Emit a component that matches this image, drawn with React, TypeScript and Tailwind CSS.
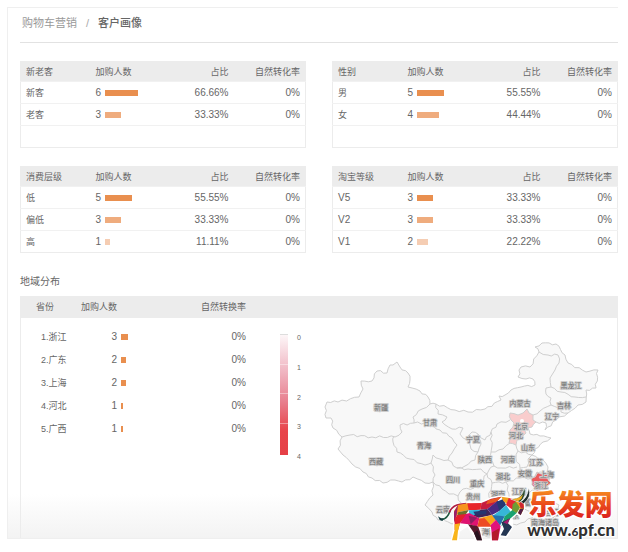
type Row = { name: string; count: number; share: string };

const BAR_SHADES = ["bg-[#e98f4f]", "bg-[#efac7e]", "bg-[#f5cdb3]"];

const GROUPS: { title: string; rows: Row[] }[] = [
  {
    title: "新老客",
    rows: [
      { name: "新客", count: 6, share: "66.66%" },
      { name: "老客", count: 3, share: "33.33%" },
    ],
  },
  {
    title: "性别",
    rows: [
      { name: "男", count: 5, share: "55.55%" },
      { name: "女", count: 4, share: "44.44%" },
    ],
  },
  {
    title: "消费层级",
    rows: [
      { name: "低", count: 5, share: "55.55%" },
      { name: "偏低", count: 3, share: "33.33%" },
      { name: "高", count: 1, share: "11.11%" },
    ],
  },
  {
    title: "淘宝等级",
    rows: [
      { name: "V5", count: 3, share: "33.33%" },
      { name: "V2", count: 3, share: "33.33%" },
      { name: "V1", count: 2, share: "22.22%" },
    ],
  },
];

const REGIONS = [
  { name: "1.浙江", count: 3 },
  { name: "2.广东", count: 2 },
  { name: "3.上海", count: 2 },
  { name: "4.河北", count: 1 },
  { name: "5.广西", count: 1 },
];

type Pt = [number, number];

const OUTLINE: Pt[] = [
  [325, 407], [327, 402], [338, 402], [359, 397], [363, 389], [361, 381], [372, 381], [377, 371],
  [387, 373], [390, 365], [393, 365], [397, 362], [400, 367], [408, 373], [410, 380], [408, 387],
  [420, 391], [428, 397], [430, 404], [436, 404], [455, 410], [468, 412], [485, 409], [501, 400],
  [499, 396], [505, 395], [511, 390], [521, 387], [535, 385], [533, 379], [526, 379], [518, 377],
  [521, 367], [530, 367], [539, 352], [535, 347], [542, 343], [556, 344], [565, 355], [568, 363],
  [586, 372], [598, 370], [596, 388], [586, 390], [586, 402], [578, 405], [568, 413], [556, 420],
  [545, 430], [546, 423], [536, 422], [528, 428], [530, 434], [540, 436], [551, 438], [543, 442],
  [535, 449], [532, 455], [543, 460], [548, 467], [549, 475], [548, 488], [545, 500], [538, 512],
  [525, 522], [508, 526], [490, 528], [475, 527], [465, 520], [452, 524], [443, 520], [438, 520],
  [432, 512], [425, 505], [433, 495], [433, 482], [425, 483], [413, 477], [402, 482], [395, 480],
  [383, 483], [372, 478], [363, 472], [352, 464], [343, 455], [338, 449], [342, 437], [333, 428],
  [331, 418], [326, 418],
];

const BORDERS: Pt[][] = [
  [[342, 437], [350, 435], [372, 437], [395, 437], [402, 432], [400, 425], [414, 423], [413, 417], [422, 409], [430, 404]],
  [[394, 436], [393, 442], [397, 452], [410, 459], [425, 465], [431, 463], [433, 455], [440, 459], [448, 460], [452, 453], [457, 445], [452, 438], [440, 430], [425, 423], [414, 423]],
  [[433, 482], [435, 475], [431, 463]],
  [[436, 404], [438, 414], [447, 417], [442, 422], [452, 429], [463, 428], [460, 434], [467, 440], [471, 449], [478, 452], [475, 460], [465, 466], [457, 468], [448, 460]],
  [[467, 440], [472, 432], [478, 434], [481, 444], [478, 452]],
  [[478, 434], [485, 440], [491, 432], [497, 424], [510, 420]],
  [[491, 432], [492, 446], [489, 458], [494, 466], [502, 468], [517, 467]],
  [[510, 443], [503, 449], [491, 452]],
  [[516, 445], [518, 451], [532, 455]],
  [[518, 451], [516, 458], [520, 468], [527, 467], [528, 459], [532, 455]],
  [[520, 468], [520, 478], [532, 478], [540, 472], [549, 475]],
  [[457, 468], [468, 469], [481, 469], [487, 474], [481, 482], [474, 488], [463, 489], [458, 496], [449, 494], [442, 489], [433, 482]],
  [[487, 474], [492, 483], [506, 482], [520, 478]],
  [[494, 466], [489, 470], [487, 474]],
  [[492, 483], [489, 497], [494, 505], [507, 506], [509, 494], [506, 482]],
  [[458, 496], [462, 507], [475, 505], [489, 502]],
  [[462, 507], [458, 514], [465, 520]],
  [[507, 506], [522, 507], [524, 496], [532, 490], [537, 492], [548, 488]],
  [[522, 507], [531, 512], [538, 512]],
  [[494, 505], [496, 514], [487, 520], [485, 528]],
  [[539, 352], [548, 355], [558, 355], [559, 363], [555, 370], [550, 378], [551, 387], [561, 392], [575, 397], [586, 397]],
  [[551, 387], [546, 388], [546, 394], [551, 398], [551, 405], [561, 408], [561, 412], [568, 413]],
  [[551, 405], [540, 411], [533, 415]],
];

const HEBEI: Pt[] = [
  [510, 413], [518, 415], [523, 413], [527, 409], [529, 413], [533, 415], [533, 420], [536, 422], [532, 427],
  [524, 429], [526, 433], [518, 438], [516, 445], [509, 443], [510, 430], [514, 423], [511, 420],
];
const ZHEJIANG: Pt[] = [
  [531, 479], [535, 476], [537, 472], [541, 474], [545, 473], [549, 476], [548, 480], [551, 483], [547, 486],
  [546, 490], [541, 490], [537, 493], [535, 488], [532, 485],
];
const TAIWAN: Pt[] = [[555, 503], [559, 505], [557, 514], [553, 518], [552, 510]];

// Adds small kinks to every segment so that borders look surveyed, not ruled.
function rough(points: Pt[], closed: boolean) {
  const all = closed ? [...points, points[0]] : points;
  let d = `M${all[0][0]} ${all[0][1]}`;
  for (let i = 1; i < all.length; i++) {
    const [ax, ay] = all[i - 1];
    const [bx, by] = all[i];
    const len = Math.hypot(bx - ax, by - ay);
    const steps = Math.max(1, Math.round(len / 4));
    for (let s = 1; s < steps; s++) {
      const t = s / steps;
      const k = Math.sin(ax * 12.9 + ay * 7.3 + s * 4.1) * 1.1;
      const x = ax + (bx - ax) * t - ((by - ay) / len) * k;
      const y = ay + (by - ay) * t + ((bx - ax) / len) * k;
      d += `L${x.toFixed(1)} ${y.toFixed(1)}`;
    }
    d += `L${bx} ${by}`;
  }
  return closed ? d + "Z" : d;
}

const LABELS: [string, number, number][] = [
  ["新疆", 381, 407], ["甘肃", 430, 422], ["青海", 424, 445], ["西藏", 376, 461], ["四川", 453, 479],
  ["云南", 443, 509], ["宁夏", 473, 439], ["陕西", 485, 459], ["重庆", 477, 483], ["贵州", 473, 496],
  ["湖北", 503, 476], ["河南", 508, 459], ["湖南", 498, 494], ["江西", 519, 491], ["安徽", 525, 473],
  ["江苏", 536, 462], ["上海", 547, 474], ["浙江", 541, 485], ["山东", 528, 447], ["河北", 516, 435],
  ["北京", 521, 426], ["内蒙古", 520, 403], ["辽宁", 552, 416], ["吉林", 564, 405], ["黑龙江", 571, 385],
  ["福建", 530, 502], ["台湾", 552, 512], ["广西", 486, 513], ["广东", 512, 515], ["南海诸岛", 545, 522],
  ["海南", 489, 531],
];

function ChinaMap() {
  return (
    <svg viewBox="318 334 299 204" className="h-[204px] min-w-0 flex-1" role="img" aria-label="地域分布">
      <g stroke="#cfcfcf" strokeWidth="1" strokeLinejoin="round">
        <path d={rough(OUTLINE, true)} fill="#f8f8f8" />
        <path d={rough(HEBEI, true)} fill="#f9cdcd" />
        <path d={rough(ZHEJIANG, true)} fill="#ea5b5d" />
        <path d={rough(TAIWAN, true)} fill="#f8f8f8" />
        <ellipse cx="489" cy="534" rx="5" ry="3" fill="#f8f8f8" />
        {BORDERS.map((b, i) => (
          <path key={i} d={rough(b, false)} fill="none" />
        ))}
        <circle cx="522" cy="421" r="2" fill="#fff" stroke="none" />
      </g>
      <g fontSize="7" textAnchor="middle" fill="#707070" stroke="#cdcdcd" strokeWidth="2" strokeLinejoin="round" paintOrder="stroke">
        {LABELS.map(([name, x, y]) => (
          <text key={name} x={x} y={y + 3}>
            {name}
          </text>
        ))}
      </g>
    </svg>
  );
}

function Watermark() {
  return (
    <svg viewBox="0 30 540 171" className="absolute right-0 -bottom-[4px] h-[57px] w-[180px]" role="img" aria-label="乐发网 www.6pf.cn">
      <defs>
        <linearGradient id="flame" x1="0" y1="0" x2="0" y2="1">
          <stop offset="0" stopColor="#f7931e" />
          <stop offset="0.5" stopColor="#ea4a1c" />
          <stop offset="1" stopColor="#d8191f" />
        </linearGradient>
      </defs>
      <path
        d="M60 90L85 84L130 84L160 70L190 65L215 69L240 66L257 80L258 100L248 121L236 114L220 128L222 155L205 184L188 182L196 160L186 165L180 196L162 196L160 155L120 155L132 196L117 196L90 150L62 168L58 197L42 197L50 160L48 130Z"
        fill="#fff" stroke="#fff" strokeWidth="8" strokeLinejoin="round"
      />
      <path d="M12 133Q28 132 36 108Q45 88 66 89" fill="none" stroke="#fff" strokeWidth="10" />
      <path d="M12 133Q28 132 36 108" fill="none" stroke="#245b43" strokeWidth="5" />
      <path d="M34 112Q43 90 66 88L85 86" fill="none" stroke="#b01f45" strokeWidth="5" />
      <path d="M0 124L8 129L18 131L13 138L5 135Z" fill="#123c40" />
      <path d="M60 90L88 85L100 88L92 105L62 112L50 135L48 108Z" fill="#f7941e" />
      <path d="M60 90L48 110L48 145L56 120Z" fill="#9c1e68" />
      <path d="M60 112L92 105L84 118L57 128Z" fill="#6c6f2c" />
      <path d="M50 132L58 120L90 116L66 145L60 166L50 165Z" fill="#e41f2c" />
      <path d="M50 148L66 145L60 168L57 196L42 196L50 165Z" fill="#f9b51b" />
      <path d="M88 85L130 84L128 104L102 106L92 105Z" fill="#e8262b" />
      <path d="M130 84L160 71L190 65L172 84L148 102L128 104Z" fill="#c51d3f" />
      <path d="M150 76L190 65L176 80L144 88Z" fill="#e95a20" />
      <path d="M92 106L128 104L122 128L94 116Z" fill="#35b3dc" />
      <path d="M128 104L148 102L162 120L122 128L106 122Z" fill="#412558" />
      <path d="M106 110L146 106L144 118L112 120Z" fill="#26356f" />
      <path d="M84 118L94 114L124 130L118 155L92 148L66 145Z" fill="#df1471" />
      <path d="M92 122L118 128L98 148Z" fill="#8d1e61" />
      <path d="M90 148L120 154L126 170L132 196L117 196L108 174Z" fill="#561b2d" />
      <path d="M108 174L118 166L132 196L117 196Z" fill="#2a1420" />
      <path d="M118 155L124 130L150 128L160 155Z" fill="#ed4b23" />
      <path d="M122 130L162 120L174 134L158 150L140 130Z" fill="#f9a51a" />
      <path d="M148 102L178 78L200 84L184 108L162 120Z" fill="#492a82" />
      <path d="M176 80L196 72L204 90L184 108Z" fill="#263874" />
      <path d="M190 65L215 69L206 86L196 78Z" fill="#f5a21b" />
      <path d="M212 69L238 74L224 104L204 90Z" fill="#e72632" />
      <path d="M184 108L204 90L218 110L200 124L164 122Z" fill="#36b6d8" />
      <path d="M162 120L200 124L186 152L172 134Z" fill="#2572ad" />
      <path d="M158 150L174 134L188 154L180 196L162 196L160 165Z" fill="#e1147a" />
      <path d="M162 172L184 160L180 196L162 196Z" fill="#b41b2d" />
      <path d="M200 124L224 104L236 114L218 130L190 154Z" fill="#19a270" />
      <path d="M224 88L240 74L246 98L236 114L222 106Z" fill="#6e9b34" />
      <path d="M190 142L216 130L210 145L222 156L204 183L188 181L198 162Z" fill="#243653" />
      <path d="M196 142L216 130L208 148Z" fill="#a61d6e" />
      <path d="M228 72L256 80L258 100L248 120L240 114L246 98Z" fill="#f39a1d" />
      <path d="M242 80L256 82L258 98L248 100Z" fill="#ce2530" />
      <path d="M246 102L258 100L248 121L240 114Z" fill="#502048" />
      <path d="M218 72Q252 76 259 37Q269 62 246 82Z" fill="#2b4b32" stroke="#fff" strokeWidth="2" />
      <path d="M222 72Q246 72 255 58L250 72L240 79Z" fill="#f4af22" />
      <path d="M248 80Q268 70 272 38Q283 66 257 86Z" fill="#1f2f2e" stroke="#fff" strokeWidth="2" />
      <text x="272" y="119" fontSize="84" fontWeight="900" fill="url(#flame)" stroke="#fff" strokeWidth="8" paintOrder="stroke">
        乐发网
      </text>
      <text x="268" y="184" fontSize="50" fontWeight="900" fill="#303030" stroke="#fff" strokeWidth="6" paintOrder="stroke" fontFamily="Lato, sans-serif">
        www.<tspan fontSize="36">6</tspan>pf.cn
      </text>
    </svg>
  );
}

function GroupTable({ title, rows }: { title: string; rows: Row[] }) {
  return (
    <table className="w-full table-fixed border border-[#ececec] bg-white text-[9px] leading-3">
      <thead>
        <tr className="h-5 bg-[#ececec]">
          <th className="w-[70px] px-[5px] text-left font-normal">{title}</th>
          <th className="px-[5px] text-left font-normal">加购人数</th>
          <th className="w-20 px-[5px] text-right font-normal">占比</th>
          <th className="w-[72px] px-[5px] text-right font-normal">自然转化率</th>
        </tr>
      </thead>
      <tbody>
        {rows.map((row, i) => (
          <tr key={row.name} className="h-[22px] border-t border-[#f1f1f1]">
            <td className={row.name.startsWith("V") ? "px-[5px] text-[10px]" : "px-[5px]"}>{row.name}</td>
            <td className="px-[5px] text-[10px]">
              <div className="flex items-center gap-[3px]">
                <span className="w-[6px]">{row.count}</span>
                <span className={`h-[6px] ${BAR_SHADES[i]}`} style={{ width: Math.floor(row.count * 5.5) }} />
              </div>
            </td>
            <td className="px-[5px] text-right text-[10px]">{row.share}</td>
            <td className="px-[5px] text-right text-[10px]">0%</td>
          </tr>
        ))}
        {rows.length < 3 && (
          <tr className="h-[22px] border-t border-[#f1f1f1]">
            <td colSpan={4} />
          </tr>
        )}
      </tbody>
    </table>
  );
}

function RegionTable() {
  return (
    <table className="w-full table-fixed text-[9px] leading-3">
      <thead>
        <tr className="h-[22px] bg-[#ececec]">
          <th className="w-[60px] pl-[15px] text-left font-normal">省份</th>
          <th className="text-left font-normal">加购人数</th>
          <th className="w-20 text-right font-normal">自然转换率</th>
        </tr>
      </thead>
      <tbody>
        <tr aria-hidden="true" className="h-[7px]" />
        {REGIONS.map((r) => (
          <tr key={r.name} className="h-[23px]">
            <td className="pl-5">{r.name}</td>
            <td className="text-[10px]">
              <div className="flex items-center gap-1">
                <span className="w-9 text-right">{r.count}</span>
                <span className="h-[6px] bg-[#e98f4f]" style={{ width: Math.round(r.count * 2.4) }} />
              </div>
            </td>
            <td className="text-right text-[10px]">0%</td>
          </tr>
        ))}
      </tbody>
    </table>
  );
}

export default function App() {
  return (
    <div className="bg-white pt-[7px] pr-[10px] pb-3 pl-[7px] font-['Liberation_Sans','Noto_Sans_CJK_SC',sans-serif] text-[#666]">
      <main className="relative border-t border-b border-l border-[#efefef] bg-[linear-gradient(to_top,#f3f3f3,#ffffff_44px)] pl-3">
        <nav aria-label="breadcrumb" className="flex h-[35px] items-center gap-[9px] border-b border-[#e2e2e2] pb-[5px] pl-[2px] text-[11px] leading-4">
          <a href="#cart" className="text-[#999]">购物车营销</a>
          <span className="text-[#aaa]">/</span>
          <span className="font-medium text-[#666]">客户画像</span>
        </nav>

        <div className="mt-[18px] grid grid-cols-2 gap-x-[26px] gap-y-[18px]">
          {GROUPS.map((g) => (
            <GroupTable key={g.title} title={g.title} rows={g.rows} />
          ))}
        </div>

        <h2 className="mt-[21px] text-[10px] leading-4">地域分布</h2>
        <section className="mt-[6px] grid grid-cols-[225px_1fr] items-start border-x border-[#ececec]">
          <RegionTable />
          <div className="min-w-0">
            <div className="h-[22px] bg-[#ececec]" />
            <div className="flex pt-4 pl-[34px]">
              <div className="h-[121px] w-2 border-t border-[#ddd] bg-[linear-gradient(#fdf6f8,#f0b6c2_30%,#e8808f_55%,#e8434a_80%,#e54046)]">
                <div className="mt-[29px] h-[30px] border-y border-white/40" />
                <div className="h-[30px] border-b border-white/40" />
              </div>
              <div className="mr-4 ml-[9px] flex h-[127px] w-[5px] flex-col justify-between text-[7px] leading-2">
                {[0, 1, 2, 3, 4].map((n) => (
                  <span key={n}>{n}</span>
                ))}
              </div>
              <ChinaMap />
            </div>
          </div>
        </section>
        <Watermark />
      </main>
    </div>
  );
}
